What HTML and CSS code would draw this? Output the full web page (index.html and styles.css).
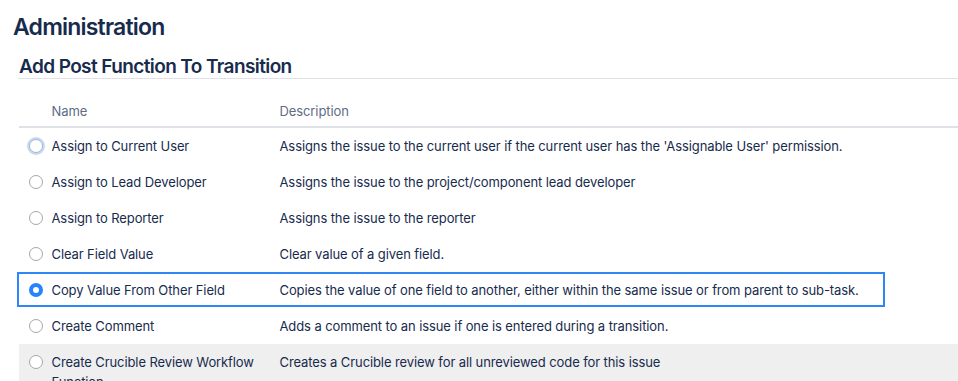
FILE: index.html
```html
<!DOCTYPE html>
<html lang="en">
<head>
<meta charset="utf-8">
<title>Administration</title>
<link rel="stylesheet" href="styles.css">
</head>
<body>
<h1 class="page-title">Administration</h1>
<section class="panel">
  <h2 class="panel-title">Add Post Function To Transition</h2>
  <table class="fn-table">
    <colgroup>
      <col class="c-radio">
      <col class="c-name">
      <col>
    </colgroup>
    <thead>
      <tr>
        <th></th>
        <th class="name">Name</th>
        <th>Description</th>
      </tr>
    </thead>
    <tbody>
      <tr>
        <td class="rad"><span class="radio focus"></span></td>
        <td class="name">Assign to Current User</td>
        <td>Assigns the issue to the current user if the current user has the 'Assignable User' permission.</td>
      </tr>
      <tr>
        <td class="rad"><span class="radio"></span></td>
        <td class="name">Assign to Lead Developer</td>
        <td>Assigns the issue to the project/component lead developer</td>
      </tr>
      <tr>
        <td class="rad"><span class="radio"></span></td>
        <td class="name">Assign to Reporter</td>
        <td>Assigns the issue to the reporter</td>
      </tr>
      <tr>
        <td class="rad"><span class="radio"></span></td>
        <td class="name">Clear Field Value</td>
        <td>Clear value of a given field.</td>
      </tr>
      <tr class="selected">
        <td class="rad"><span class="radio checked"></span></td>
        <td class="name">Copy Value From Other Field</td>
        <td>Copies the value of one field to another, either within the same issue or from parent to sub-task.</td>
      </tr>
      <tr>
        <td class="rad"><span class="radio"></span></td>
        <td class="name">Create Comment</td>
        <td>Adds a comment to an issue if one is entered during a transition.</td>
      </tr>
      <tr class="hover">
        <td class="rad"><span class="radio"></span></td>
        <td class="name">Create Crucible Review Workflow Function</td>
        <td>Creates a Crucible review for all unreviewed code for this issue</td>
      </tr>
    </tbody>
  </table>
</section>
</body>
</html>
```

FILE: styles.css
```css
html, body {
  margin: 0;
  padding: 0;
  background: #ffffff;
}

body {
  font-family: Inter, "Noto Sans", "Liberation Sans", sans-serif;
  color: #172b4d;
  overflow: hidden;
}

.page-title {
  margin: 13px 0 0 13px;
  font-size: 23px;
  line-height: 28px;
  font-weight: 600;
  letter-spacing: -0.8px;
  color: #172b4d;
}

.panel {
  margin: 15px 0 0 18px;
}

.panel-title {
  margin: 0;
  padding-left: 1px;
  font-size: 19px;
  line-height: 22px;
  font-weight: 600;
  letter-spacing: -0.6px;
  color: #172b4d;
  border-bottom: 1px solid #dfe1e6;
}

.fn-table {
  width: 100%;
  margin-top: 12px;
  border-collapse: collapse;
  table-layout: fixed;
  font-size: 13px;
  line-height: 20px;
  letter-spacing: -0.1px;
}

.c-radio { width: 26px; }
.c-name { width: 235px; }

.fn-table th {
  text-align: left;
  font-weight: 400;
  color: #5e6c84;
  padding: 10px 10px 5px 0;
  border-bottom: 2px solid #dfe1e6;
}

.fn-table th.name,
.fn-table td.name {
  padding-left: 7px;
  padding-right: 20px;
}

.fn-table td {
  padding: 8px 10px 8px 0;
  vertical-align: top;
  color: #172b4d;
}

.fn-table td.rad {
  padding: 8px 0 0 10px;
  position: relative;
}

.fn-table tr.hover td {
  background: #efefef;
}

.fn-table tr.hover td.rad {
  border-left: 1px solid #ffffff;
}

.radio {
  display: block;
  box-sizing: border-box;
  width: 14px;
  height: 14px;
  margin-top: 3px;
  border-radius: 50%;
  border: 1px solid #a6a6a6;
  background: #ffffff;
}

.radio.focus {
  border-color: #9fb6d6;
  box-shadow: 0 0 0 2px #c9d9ef;
}

.radio.checked {
  border: 4px solid #2684ff;
  background: #ffffff;
}

.selected td.rad::after {
  content: "";
  position: absolute;
  left: -2px;
  top: 0;
  width: 868px;
  height: 35px;
  box-sizing: border-box;
  border: 2px solid #2d87f5;
  pointer-events: none;
}
```
